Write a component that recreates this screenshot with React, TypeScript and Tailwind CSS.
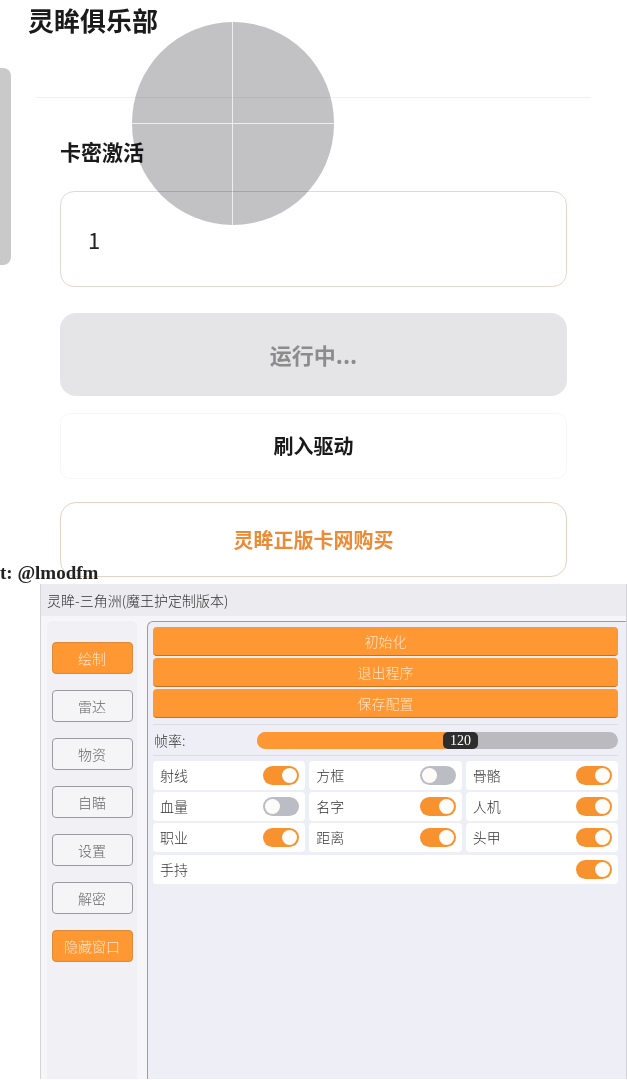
const cjk = { fontFamily: '"Noto Sans CJK SC", "Noto Sans", sans-serif' };
const serif = { fontFamily: '"Liberation Serif", "Noto Sans CJK SC", serif' };

function Toggle({ on }: { on: boolean }) {
  return (
    <div
      className={`flex h-[19px] w-[36px] items-center rounded-full px-[2px] ${
        on ? "justify-end bg-[#f7922f]" : "justify-start bg-[#bcbcc4]"
      }`}
    >
      <div className="h-[15px] w-[15px] rounded-full bg-[#fdfcf8]" />
    </div>
  );
}

function Cell({ label, on }: { label: string; on: boolean }) {
  return (
    <div className="flex h-[29px] items-center justify-between rounded-[4px] bg-white pl-[7px] pr-[6px]">
      <span className="text-[14px] font-light text-[#333]">{label}</span>
      <Toggle on={on} />
    </div>
  );
}

function SideBtn({ label, active }: { label: string; active?: boolean }) {
  return (
    <div
      className={`flex h-[32px] w-[81px] items-center justify-center rounded-[4px] border text-[14px] font-light ${
        active
          ? "border-[#d98a3c] bg-[#ff9733] text-[#ffe6cc]"
          : "border-[#9a9aa0] bg-[#f5f5f8] text-[#666]"
      }`}
    >
      {label}
    </div>
  );
}

function OrangeBtn({ label }: { label: string }) {
  return (
    <div className="flex h-[29px] items-center justify-center rounded-[4px] border-b border-[#c8711f] bg-[#ff9733] text-[14px] font-light text-[#ffe3c4]">
      {label}
    </div>
  );
}

export default function App() {
  const rows: [string, boolean][][] = [
    [["射线", true], ["方框", false], ["骨骼", true]],
    [["血量", false], ["名字", true], ["人机", true]],
    [["职业", true], ["距离", true], ["头甲", true]],
  ];
  return (
    <div className="relative h-[1080px] w-[627px] overflow-hidden bg-white" style={cjk}>
      {/* left floating handle */}
      <div className="absolute left-0 top-[68px] h-[197px] w-[11px] rounded-r-[8px] bg-[#c9c9c9]" />

      <div className="px-[28px] pt-[4px]">
        <div className="text-[26px] font-bold leading-[32px] text-[#1a1a1a]">灵眸俱乐部</div>
      </div>
      <div className="mx-[36px] mt-[61px] h-px bg-[#f6f0e2]" />
      <div className="px-[60px]">
        <div className="mt-[41px] text-[21px] font-bold leading-[24px] text-[#1a1a1a]">卡密激活</div>
        <div className="mt-[28px] flex h-[96px] items-center rounded-[14px] border border-[#e2d8ce] pl-[27px] text-[22px] text-[#222]">
          1
        </div>
        <div className="mt-[26px] flex h-[83px] items-center justify-center rounded-[16px] bg-[#e5e5e8] text-[22px] font-bold text-[#8c8c8c]">
          运行中...
        </div>
        <div className="mt-[17px] flex h-[66px] items-center justify-center rounded-[10px] border border-[#f7f7f7] text-[20px] font-bold text-[#1a1a1a]">
          刷入驱动
        </div>
        <div className="mt-[23px] flex h-[75px] items-center justify-center rounded-[16px] border border-[#e4d4c6] text-[20px] font-bold text-[#ec8a35]">
          灵眸正版卡网购买
        </div>
      </div>

      {/* watermark */}
      <div
        className="absolute left-0 top-[562px] text-[19px] font-bold leading-[22px] text-[#222]"
        style={serif}
      >
        t: @lmodfm
      </div>

      {/* crosshair overlay */}
      <div className="absolute left-[132px] top-[22px] h-[203px] w-[202px] overflow-hidden rounded-full bg-[#c2c2c5] mix-blend-multiply">
        <div className="absolute left-[100px] top-0 h-full w-px bg-[#eeeeee]" />
        <div className="absolute left-0 top-[101px] h-px w-full bg-[#eeeeee]" />
      </div>

      {/* mod panel */}
      <div className="ml-[40px] mt-[7px] flex h-[495px] flex-col border-l border-r border-[#d4d4da] bg-[#f6f6f9]">
        <div className="flex h-[32px] items-center bg-[#ebebf0] pl-[6px] text-[14px] font-light text-[#333]">
          灵眸-三角洲(魔王护定制版本)
        </div>
        <div className="flex flex-1 pt-[5px]">
          <div className="ml-[6px] flex w-[90px] flex-col items-center gap-[16px] rounded-t-[6px] bg-[#f0f0f5] pt-[21px]">
            <SideBtn label="绘制" active />
            <SideBtn label="雷达" />
            <SideBtn label="物资" />
            <SideBtn label="自瞄" />
            <SideBtn label="设置" />
            <SideBtn label="解密" />
            <SideBtn label="隐藏窗口" active />
          </div>
          <div className="ml-[10px] flex flex-1 flex-col rounded-tl-[6px] border-l border-t border-[#9b9ba2] bg-[#eeeef6] pl-[5px] pr-[8px] pt-[5px]">
            <div className="flex flex-col gap-[2px]">
              <OrangeBtn label="初始化" />
              <OrangeBtn label="退出程序" />
              <OrangeBtn label="保存配置" />
            </div>
            <div className="mt-[6px] h-px bg-[#dcdce2]" />
            <div className="flex h-[30px] items-center">
              <span className="w-[104px] pl-[1px] text-[14px] font-light text-[#333]">帧率:</span>
              <div className="relative flex h-[17px] flex-1 overflow-hidden rounded-full bg-[#bbbbbf]">
                <div className="h-full w-[188px] bg-[#ff9733]" />
                <div
                  className="absolute left-[186px] top-0 flex h-full w-[35px] items-center justify-center rounded-[5px] bg-[#2e2e2e] text-[14px] text-white"
                  style={serif}
                >
                  120
                </div>
              </div>
            </div>
            <div className="h-px bg-[#dcdce2]" />
            <div className="mt-[5px] flex flex-col gap-[2px]">
              {rows.map((r, i) => (
                <div key={i} className="grid grid-cols-3 gap-[4px]">
                  {r.map(([l, on]) => (
                    <Cell key={l} label={l} on={on} />
                  ))}
                </div>
              ))}
              <div className="mt-[1px]">
                <Cell label="手持" on />
              </div>
            </div>
          </div>
        </div>
      </div>
    </div>
  );
}
